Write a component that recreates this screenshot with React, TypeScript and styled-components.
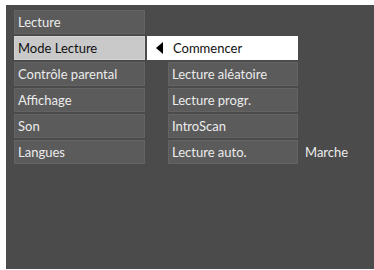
import React from "react";
import styled, { createGlobalStyle } from "styled-components";

const GlobalStyle = createGlobalStyle`
  html, body {
    margin: 0;
    padding: 0;
    background: #ffffff;
  }
  body {
    font-family: Lato, "Open Sans", sans-serif;
  }
`;

const Screen = styled.div`
  margin: 5px 0 0 6px;
  height: 264px;
  background: #4b4b4b;
  padding: 5px 0 0 8px;
  box-sizing: border-box;
`;

const Grid = styled.div`
  display: grid;
  grid-template-columns: 131px 23px 130px auto;
  grid-auto-rows: 24px;
  row-gap: 2px;
`;

const Item = styled.div<{ $selected?: boolean }>`
  grid-column: 1;
  display: flex;
  align-items: center;
  padding-left: 3px;
  box-sizing: border-box;
  background: ${(p) => (p.$selected ? "#c9c9c9" : "#5b5b5b")};
  border: 1px solid ${(p) => (p.$selected ? "#d2d2d2" : "#636363")};
  color: ${(p) => (p.$selected ? "#111" : "#ececec")};
  font-size: 13px;
  white-space: nowrap;
`;

const SubItem = styled.div<{ $active?: boolean }>`
  grid-column: ${(p) => (p.$active ? "2 / 4" : "3")};
  margin-left: ${(p) => (p.$active ? "2px" : "0")};
  display: flex;
  align-items: center;
  gap: 10px;
  padding-left: ${(p) => (p.$active ? "8px" : "3px")};
  box-sizing: border-box;
  background: ${(p) => (p.$active ? "#ffffff" : "#5b5b5b")};
  border: 1px solid ${(p) => (p.$active ? "#ffffff" : "#636363")};
  color: ${(p) => (p.$active ? "#111" : "#ececec")};
  font-size: 13px;
  white-space: nowrap;
`;

const Arrow = styled.span`
  width: 0;
  height: 0;
  border-top: 6px solid transparent;
  border-bottom: 6px solid transparent;
  border-right: 7px solid #000;
`;

const Value = styled.div`
  grid-column: 4;
  display: flex;
  align-items: center;
  padding-left: 7px;
  color: #ececec;
  font-size: 13px;
`;

const left = ["Mode Lecture", "Contrôle parental", "Affichage", "Son", "Langues"];
const right = ["Commencer", "Lecture aléatoire", "Lecture progr.", "IntroScan", "Lecture auto."];

export default function App() {
  return (
    <>
      <GlobalStyle />
      <Screen>
        <Grid>
          <Item>Lecture</Item>
          {left.map((label, i) => (
            <React.Fragment key={label}>
              <Item $selected={i === 0}>{label}</Item>
              <SubItem $active={i === 0}>
                {i === 0 && <Arrow />}
                {right[i]}
              </SubItem>
              {i === 4 && <Value>Marche</Value>}
            </React.Fragment>
          ))}
        </Grid>
      </Screen>
    </>
  );
}
